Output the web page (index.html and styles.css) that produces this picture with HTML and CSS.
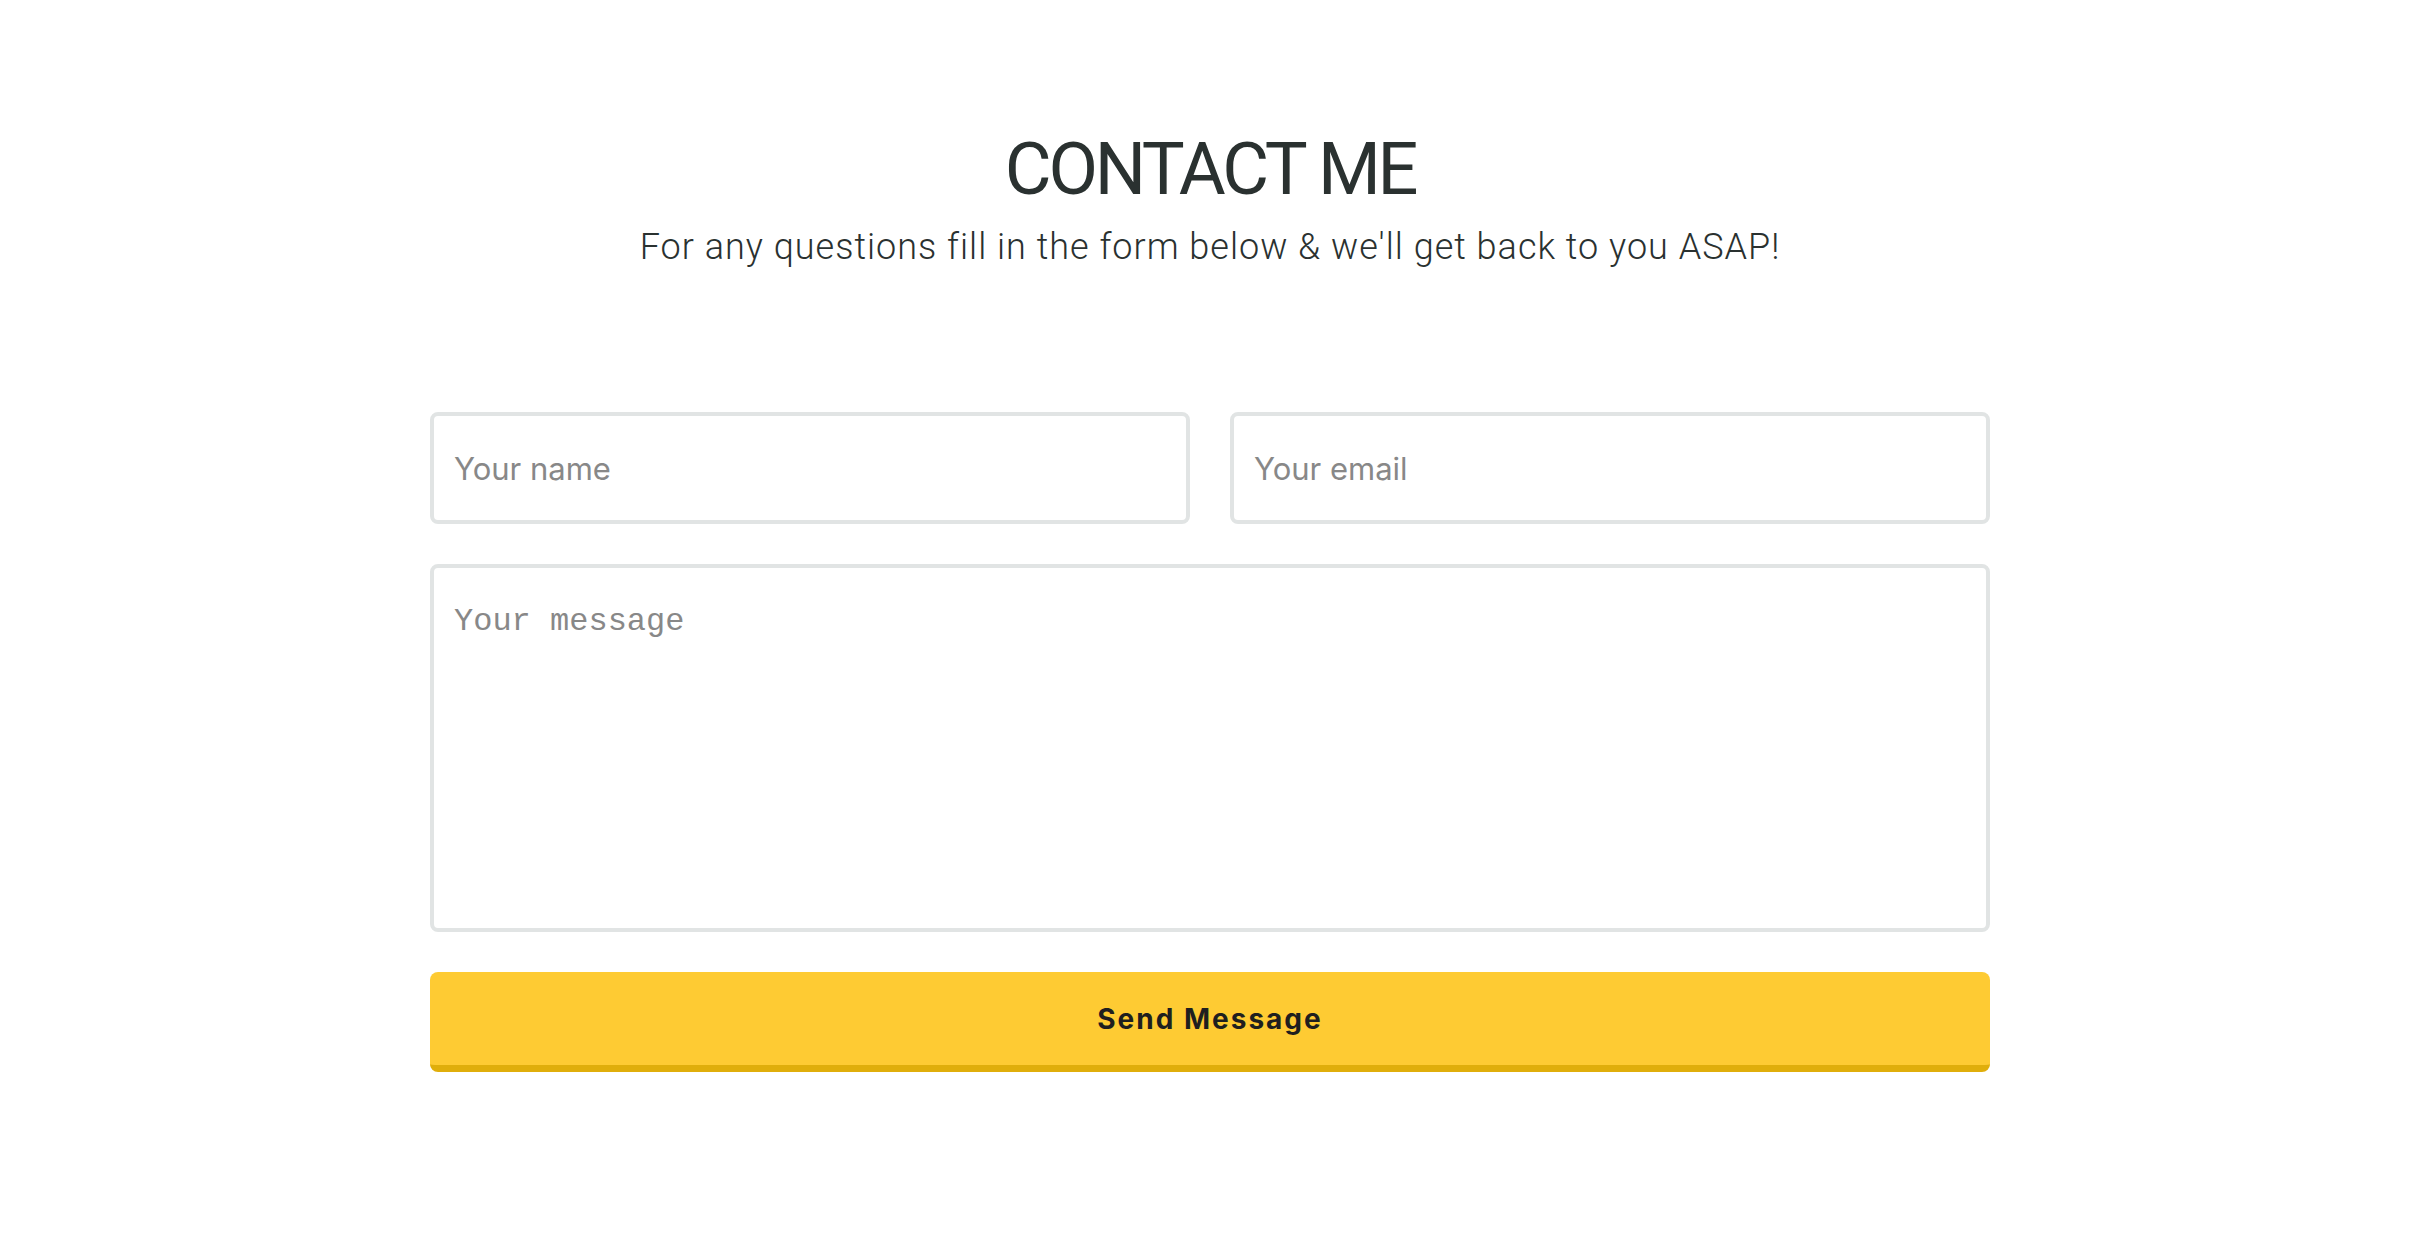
FILE: index.html
```html
<!DOCTYPE html>
<html lang="en">
<head>
<meta charset="utf-8">
<title>Contact Me</title>
<link rel="stylesheet" href="styles.css">
</head>
<body>
<main class="page">
  <h1 class="title">CONTACT ME</h1>
  <p class="subtitle">For any questions fill in the form below &amp; we'll get back to you ASAP!</p>
  <form class="form">
    <div class="row">
      <input class="field" type="text" placeholder="Your name">
      <input class="field" type="email" placeholder="Your email">
    </div>
    <textarea class="field message" placeholder="Your message"></textarea>
    <button class="send" type="button">Send Message</button>
  </form>
</main>
</body>
</html>
```
FILE: styles.css
```css
html, body {
  margin: 0;
  padding: 0;
  background: #ffffff;
}

.page {
  display: flex;
  flex-direction: column;
  align-items: center;
  padding-top: 134px;
  font-family: Roboto, "Liberation Sans", sans-serif;
  color: #2a3130;
}

.title {
  margin: 0;
  font-family: Roboto, "Liberation Sans", sans-serif;
  font-weight: 400;
  font-size: 72px;
  line-height: 72px;
  letter-spacing: -3.2px;
  color: #2a3130;
}

.subtitle {
  margin: 23px 0 0;
  font-family: Roboto, "Liberation Sans", sans-serif;
  font-weight: 300;
  font-size: 36px;
  line-height: 36px;
  letter-spacing: 1px;
  color: #2a3130;
}

.form {
  width: 1560px;
  margin-top: 147px;
  display: flex;
  flex-direction: column;
  gap: 40px;
}

.row {
  display: grid;
  grid-template-columns: 1fr 1fr;
  gap: 40px;
}

.field {
  box-sizing: border-box;
  width: 100%;
  height: 112px;
  margin: 0;
  padding: 0 20px;
  border: 4px solid #e1e4e4;
  border-radius: 8px;
  background: #ffffff;
  font-family: Inter, "Liberation Sans", sans-serif;
  font-size: 31px;
  color: #333333;
  outline: none;
}

.field::placeholder {
  color: #888888;
  opacity: 1;
}

.message {
  height: 368px;
  padding: 35px 20px 20px;
  font-family: "Liberation Mono", monospace;
  font-size: 32px;
  line-height: normal;
  resize: none;
}

.send {
  box-sizing: border-box;
  width: 100%;
  height: 100px;
  margin: 0;
  border: 0;
  border-bottom: 7px solid #e0ae0b;
  border-radius: 8px;
  background: #fecb33;
  font-family: Inter, "Liberation Sans", sans-serif;
  font-weight: 700;
  font-size: 28px;
  letter-spacing: 2px;
  color: #1f1f1f;
  cursor: pointer;
}
```
